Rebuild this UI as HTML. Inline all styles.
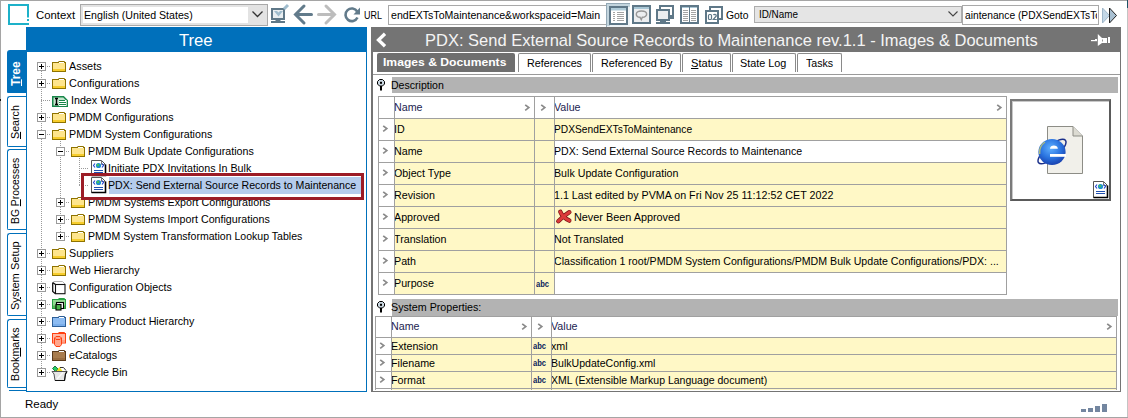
<!DOCTYPE html>
<html><head><meta charset="utf-8">
<style>
*{box-sizing:border-box;margin:0;padding:0}
html,body{width:1128px;height:418px;overflow:hidden;background:#fff}
body{position:relative;font-family:"Liberation Sans",sans-serif;color:#000}
.a{position:absolute}
.t{position:absolute;white-space:nowrap;font-family:"Liberation Sans",sans-serif}
svg{position:absolute;overflow:visible}
</style></head><body>
<div class="a" style="left:0px;top:0px;width:1128px;height:1px;background:#a5a5a5"></div>
<div class="a" style="left:0px;top:0px;width:1px;height:418px;background:#a5a5a5"></div>
<div class="a" style="left:1127px;top:0px;width:1px;height:418px;background:#c4c4c4"></div>
<div class="a" style="left:1127px;top:0px;width:1px;height:8px;background:#1d5366"></div>
<div class="a" style="left:0px;top:417px;width:1128px;height:1px;background:#a5a5a5"></div>
<div class="a" style="left:0px;top:99px;width:1px;height:2px;background:#111"></div>
<svg style="left:0px;top:0px" width="40" height="30"><g fill="#1db1c9"><rect x="8" y="4" width="21" height="2"/><rect x="8" y="4" width="2" height="21"/><rect x="8" y="23" width="21" height="2"/><rect x="27" y="4" width="2" height="13.5"/><rect x="27" y="19" width="2" height="2"/></g></svg>
<div class="t" style="left:36px;top:5.02px;font-size:11.5px;line-height:20px;transform:scaleX(0.985);transform-origin:0 0">Context</div>
<div class="a" style="left:80px;top:4px;width:188px;height:22px;background:#e3e3e3;border:1px solid #a9a9a9"></div>
<div class="a" style="left:83px;top:7px;width:165px;height:16px;background:#fff"></div>
<div class="t" style="left:83.5px;top:5.02px;font-size:11.5px;line-height:20px;transform:scaleX(0.924);transform-origin:0 0">English (United States)</div>
<svg style="left:250px;top:10px" width="16" height="10"><path d="M2.5 1.5 L7.5 6.5 L12.5 1.5" stroke="#333" stroke-width="1.3" fill="none"/></svg>
<svg style="left:270px;top:3px" width="22" height="22"><rect x="2" y="6" width="12" height="10" fill="#e9eef1" stroke="#5f7888" stroke-width="2"/><path d="M4 8 H7 L8.5 9.5 L10 8 H13 L8.5 13.5 Z" fill="#9fbccd"/><rect x="5.5" y="16" width="5" height="3" fill="#5f7888"/><rect x="1" y="18" width="14" height="2" fill="#5f7888"/><path d="M14 6 L18 2" stroke="#9fbccd" stroke-width="3"/></svg>
<svg style="left:290px;top:2px" width="26" height="26"><path d="M14 4 L5.5 12.5 L14 21 M6 12.5 H21.5" stroke="#627b8b" stroke-width="3" fill="none" stroke-linecap="round"/></svg>
<svg style="left:314px;top:2px" width="26" height="26"><path d="M12 4 L20.5 12.5 L12 21 M4.5 12.5 H20" stroke="#bdbdbd" stroke-width="3" fill="none" stroke-linecap="round"/></svg>
<svg style="left:340px;top:2px" width="24" height="24"><path d="M17.2 9.5 A6.3 6.3 0 1 0 17.5 15.5" stroke="#627b8b" stroke-width="2.6" fill="none"/><path d="M20 5.5 V12.5 H13.5 Z" fill="#627b8b"/></svg>
<div class="t" style="left:364px;top:5.02px;font-size:11.5px;line-height:20px;transform:scaleX(0.78);transform-origin:0 0">URL</div>
<div class="a" style="left:388px;top:5px;width:219px;height:20px;background:#fff;border:1px solid #a9a9a9"></div>
<div class="a" style="left:389px;top:6px;width:217px;height:18px;overflow:hidden">
<div class="t" style="left:1.5px;top:-0.98px;font-size:11.5px;line-height:20px;transform:scaleX(0.92);transform-origin:0 0">endEXTsToMaintenance&amp;workspaceid=Main</div>
</div>
<div class="a" style="left:606px;top:3px;width:24px;height:24px;background:#eef3f6;border-left:1px solid #93a8b5;border-top:1px solid #93a8b5"></div>
<div class="a" style="left:607px;top:4px;width:23px;height:3px;background:#c3d5de"></div>
<div class="a" style="left:607px;top:4px;width:3px;height:22px;background:#c3d5de"></div>
<svg style="left:609px;top:6px" width="19" height="19"><rect x="1" y="1" width="17" height="17" fill="#fff" stroke="#5f7888" stroke-width="2"/><rect x="2" y="2" width="15" height="2.5" fill="#b0ccd9"/><g stroke="#a4a4a4" stroke-width="1"><path d="M4 6.5H6M8 6.5H15M4 8.5H6M8 8.5H15M4 10.5H6M8 10.5H15M4 12.5H6M8 12.5H15M4 14.5H6M8 14.5H15"/></g></svg>
<svg style="left:632px;top:5px" width="19" height="19"><rect x="1" y="1" width="17" height="17" fill="#eceef0" stroke="#5f7888" stroke-width="2"/><rect x="2" y="2" width="15" height="2" fill="#a9c7d6"/><path d="M9.5 6 C2.8 6 2.8 12 8 12.3 L9.3 14.6 L10.3 12.3 C16.2 12 16.2 6 9.5 6 Z" fill="none" stroke="#989898" stroke-width="1.4"/></svg>
<svg style="left:655px;top:5px" width="20" height="20"><rect x="5" y="1" width="13" height="10" fill="#fff" stroke="#5f7888" stroke-width="2"/><rect x="2" y="5" width="12" height="10" fill="#eceef0" stroke="#5f7888" stroke-width="2"/><rect x="14" y="12" width="5" height="2" fill="#5f7888"/><rect x="5" y="15" width="6" height="2" fill="#5f7888"/><rect x="1" y="17" width="14" height="2" fill="#5f7888"/></svg>
<svg style="left:680px;top:5px" width="19" height="19"><rect x="1" y="1" width="17" height="17" fill="#fff" stroke="#5f7888" stroke-width="2"/><rect x="2" y="2" width="15" height="1" fill="#a9c7d6"/><rect x="9" y="2" width="1" height="15" fill="#5f7888"/><g stroke="#a4a4a4" stroke-width="1"><path d="M3 5.5H8M11 5.5H16M3 7.5H8M11 7.5H16M3 9.5H8M11 9.5H16M3 11.5H8M11 11.5H16M3 13.5H8M11 13.5H16M3 15.5H8M11 15.5H16"/></g></svg>
<svg style="left:704px;top:5px" width="20" height="20"><rect x="6" y="2" width="12" height="12" fill="#fff" stroke="#5f7888" stroke-width="2"/><rect x="2" y="6" width="12" height="12" fill="#fff" stroke="#5f7888" stroke-width="2"/><rect x="4.5" y="9.5" width="3" height="5" rx="1" fill="none" stroke="#5f7888" stroke-width="1.2"/><path d="M9.3 10 Q9.8 9.3 11 9.3 Q12.5 9.5 12.3 11 L9.3 14.5 H12.8" fill="none" stroke="#5f7888" stroke-width="1.2"/></svg>
<div class="t" style="left:726px;top:5.02px;font-size:11.5px;line-height:20px;transform:scaleX(0.9);transform-origin:0 0">Goto</div>
<div class="a" style="left:754px;top:6px;width:208px;height:17px;background:#e5e5e5;border:1px solid #acacac"></div>
<div class="t" style="left:759px;top:4.36px;font-size:10.5px;line-height:20px;transform:scaleX(0.94);transform-origin:0 0">ID/Name</div>
<svg style="left:946px;top:10px" width="16" height="10"><path d="M2.5 1.5 L7 6 L11.5 1.5" stroke="#444" stroke-width="1.1" fill="none"/></svg>
<div class="a" style="left:962px;top:5px;width:137px;height:20px;background:#fff;border:1px solid #a9a9a9"></div>
<div class="a" style="left:963px;top:6px;width:134px;height:18px;overflow:hidden">
<div class="t" style="left:1.5px;top:-0.98px;font-size:11.5px;line-height:20px;transform:scaleX(0.89);transform-origin:0 0">aintenance (PDXSendEXTsToMaintenance)</div>
</div>
<svg style="left:1100px;top:6px" width="20" height="20"><path d="M2.5 2 L9.5 9.5 L2.5 17 Z" fill="#c3d7e6" stroke="#9fb6c8" stroke-width="1"/><path d="M9.5 2 L16.5 9.5 L9.5 17 Z" fill="#a9c0d2" stroke="#222" stroke-width="1"/></svg>
<div class="a" style="left:7px;top:50px;width:20px;height:43px;background:#0070bb;border-radius:3px 0 0 1px"></div>
<div class="a" style="left:9.80px;top:86px;transform:rotate(-90deg) scaleX(1);transform-origin:0 0;font:bold 12px/12px 'Liberation Sans';color:#fff;white-space:nowrap"><u>T</u>ree</div>
<div class="a" style="left:7px;top:96px;width:20px;height:51px;background:#fff;border:1px solid #0070bb;border-right:0;border-radius:3px 0 0 2px"></div>
<div class="a" style="left:10.22px;top:138.5px;transform:rotate(-90deg) scaleX(0.93);transform-origin:0 0;font:11.5px/11.5px 'Liberation Sans';color:#000;white-space:nowrap"><u>S</u>earch</div>
<div class="a" style="left:7px;top:149px;width:20px;height:81px;background:#fff;border:1px solid #0070bb;border-right:0;border-radius:3px 0 0 2px"></div>
<div class="a" style="left:10.22px;top:223.5px;transform:rotate(-90deg) scaleX(0.9);transform-origin:0 0;font:11.5px/11.5px 'Liberation Sans';color:#000;white-space:nowrap">BG <u>P</u>rocesses</div>
<div class="a" style="left:7px;top:233px;width:20px;height:83px;background:#fff;border:1px solid #0070bb;border-right:0;border-radius:3px 0 0 2px"></div>
<div class="a" style="left:10.22px;top:309.5px;transform:rotate(-90deg) scaleX(0.96);transform-origin:0 0;font:11.5px/11.5px 'Liberation Sans';color:#000;white-space:nowrap">S<u>y</u>stem Setup</div>
<div class="a" style="left:7px;top:319px;width:20px;height:69px;background:#fff;border:1px solid #0070bb;border-right:0;border-radius:3px 0 0 2px"></div>
<div class="a" style="left:10.22px;top:380.5px;transform:rotate(-90deg) scaleX(0.93);transform-origin:0 0;font:11.5px/11.5px 'Liberation Sans';color:#000;white-space:nowrap">Book<u>m</u>arks</div>
<div class="a" style="left:9px;top:390px;width:18px;height:1px;background:#0070bb"></div>
<div class="a" style="left:26px;top:27px;width:341px;height:365px;background:transparent;border:1px solid #0070bb;border-top:0"></div>
<div class="a" style="left:26px;top:27px;width:341px;height:25px;background:#0070bb"></div>
<div class="t" style="left:179px;top:30.71px;font-size:17px;line-height:20px;transform:scaleX(0.98);transform-origin:0 0;color:#fff">Tree</div>
<div class="a" style="left:41px;top:71px;width:1px;height:297px;background:repeating-linear-gradient(#9a9a9a 0 1px,transparent 1px 2px)"></div>
<div class="a" style="left:60px;top:139px;width:1px;height:93px;background:repeating-linear-gradient(#9a9a9a 0 1px,transparent 1px 2px)"></div>
<div class="a" style="left:79px;top:156px;width:1px;height:30px;background:repeating-linear-gradient(#9a9a9a 0 1px,transparent 1px 2px)"></div>
<div class="a" style="left:109px;top:177px;width:252px;height:17px;background:#b5ccec"></div>
<div class="a" style="left:47px;top:66px;width:4px;height:1px;background:repeating-linear-gradient(90deg,#9a9a9a 0 1px,transparent 1px 2px)"></div>
<svg style="left:37px;top:62px" width="9" height="9"><rect x="0.5" y="0.5" width="8" height="8" fill="#fff" stroke="#9a9a9a"/><rect x="2" y="4" width="5" height="1" fill="#000"/><rect x="4" y="2" width="1" height="5" fill="#000"/></svg>
<svg style="left:52px;top:61px" width="15" height="12"><path d="M6.5 0.5 H12.5 V2.5" fill="none" stroke="#8f7300"/><rect x="0.5" y="1.5" width="13" height="9" fill="#fee58c" stroke="#8f7300"/><rect x="1" y="8" width="12" height="2" fill="#f7cd2c"/><rect x="7" y="1" width="5" height="1" fill="#fff"/></svg>
<div class="t" style="left:68.6px;top:56.02px;font-size:11.5px;line-height:20px;transform:scaleX(0.945);transform-origin:0 0">Assets</div>
<div class="a" style="left:47px;top:83px;width:4px;height:1px;background:repeating-linear-gradient(90deg,#9a9a9a 0 1px,transparent 1px 2px)"></div>
<svg style="left:37px;top:79px" width="9" height="9"><rect x="0.5" y="0.5" width="8" height="8" fill="#fff" stroke="#9a9a9a"/><rect x="2" y="4" width="5" height="1" fill="#000"/><rect x="4" y="2" width="1" height="5" fill="#000"/></svg>
<svg style="left:52px;top:78px" width="15" height="12"><path d="M6.5 0.5 H12.5 V2.5" fill="none" stroke="#8f7300"/><rect x="0.5" y="1.5" width="13" height="9" fill="#fee58c" stroke="#8f7300"/><rect x="1" y="8" width="12" height="2" fill="#f7cd2c"/><rect x="7" y="1" width="5" height="1" fill="#fff"/></svg>
<div class="t" style="left:68.6px;top:73.02px;font-size:11.5px;line-height:20px;transform:scaleX(0.949);transform-origin:0 0">Configurations</div>
<div class="a" style="left:41px;top:100px;width:10px;height:1px;background:repeating-linear-gradient(90deg,#9a9a9a 0 1px,transparent 1px 2px)"></div>
<svg style="left:52px;top:96px" width="17" height="12"><path d="M0.75 0.75 H11.5 L15.25 4.5 V10.25 H0.75 Z" fill="#c4e4cc" stroke="#18874a" stroke-width="1.5"/><rect x="7" y="4" width="7.5" height="6" fill="#fff"/><path d="M7 4.5 H13 M7 6.5 H14 M7 8.5 H14" stroke="#18874a" stroke-width="1.2"/><path d="M3 2.5 H6 M4.5 2.5 V8.5 M3 8.5 H6" stroke="#000" stroke-width="1.4"/></svg>
<div class="t" style="left:70.5px;top:90.02px;font-size:11.5px;line-height:20px;transform:scaleX(0.93);transform-origin:0 0">Index Words</div>
<div class="a" style="left:47px;top:117px;width:4px;height:1px;background:repeating-linear-gradient(90deg,#9a9a9a 0 1px,transparent 1px 2px)"></div>
<svg style="left:37px;top:113px" width="9" height="9"><rect x="0.5" y="0.5" width="8" height="8" fill="#fff" stroke="#9a9a9a"/><rect x="2" y="4" width="5" height="1" fill="#000"/><rect x="4" y="2" width="1" height="5" fill="#000"/></svg>
<svg style="left:52px;top:112px" width="15" height="12"><path d="M6.5 0.5 H12.5 V2.5" fill="none" stroke="#8f7300"/><rect x="0.5" y="1.5" width="13" height="9" fill="#fee58c" stroke="#8f7300"/><rect x="1" y="8" width="12" height="2" fill="#f7cd2c"/><rect x="7" y="1" width="5" height="1" fill="#fff"/></svg>
<div class="t" style="left:68.6px;top:107.02px;font-size:11.5px;line-height:20px;transform:scaleX(0.93);transform-origin:0 0">PMDM Configurations</div>
<div class="a" style="left:47px;top:134px;width:4px;height:1px;background:repeating-linear-gradient(90deg,#9a9a9a 0 1px,transparent 1px 2px)"></div>
<svg style="left:37px;top:130px" width="9" height="9"><rect x="0.5" y="0.5" width="8" height="8" fill="#fff" stroke="#9a9a9a"/><rect x="2" y="4" width="5" height="1" fill="#000"/></svg>
<svg style="left:52px;top:129px" width="15" height="12"><path d="M6.5 0.5 H12.5 V2.5" fill="none" stroke="#8f7300"/><rect x="0.5" y="1.5" width="13" height="9" fill="#fee58c" stroke="#8f7300"/><rect x="1" y="8" width="12" height="2" fill="#f7cd2c"/><rect x="7" y="1" width="5" height="1" fill="#fff"/></svg>
<div class="t" style="left:68.6px;top:124.02px;font-size:11.5px;line-height:20px;transform:scaleX(0.93);transform-origin:0 0">PMDM System Configurations</div>
<div class="a" style="left:66px;top:151px;width:4px;height:1px;background:repeating-linear-gradient(90deg,#9a9a9a 0 1px,transparent 1px 2px)"></div>
<svg style="left:56px;top:147px" width="9" height="9"><rect x="0.5" y="0.5" width="8" height="8" fill="#fff" stroke="#9a9a9a"/><rect x="2" y="4" width="5" height="1" fill="#000"/></svg>
<svg style="left:71px;top:146px" width="15" height="12"><path d="M6.5 0.5 H12.5 V2.5" fill="none" stroke="#8f7300"/><rect x="0.5" y="1.5" width="13" height="9" fill="#fee58c" stroke="#8f7300"/><rect x="1" y="8" width="12" height="2" fill="#f7cd2c"/><rect x="7" y="1" width="5" height="1" fill="#fff"/></svg>
<div class="t" style="left:87.5px;top:141.02px;font-size:11.5px;line-height:20px;transform:scaleX(0.93);transform-origin:0 0">PMDM Bulk Update Configurations</div>
<div class="a" style="left:79px;top:168px;width:10px;height:1px;background:repeating-linear-gradient(90deg,#9a9a9a 0 1px,transparent 1px 2px)"></div>
<svg style="left:91px;top:160px" width="16" height="17"><path d="M0.5 0.5 H10.5 L14.5 4.5 V15.5 H0.5 Z" fill="#fff" stroke="#555"/><path d="M14.5 4.5 V15.5 H0.5" fill="none" stroke="#000" stroke-width="1.6"/><path d="M10.5 0.5 V4.5 H14.5" fill="none" stroke="#777"/><path d="M4 3.5 L2.5 5.5 L4 7.5 M11 3.5 L12.5 5.5 L11 7.5" fill="none" stroke="#1f3fd0" stroke-width="1.1"/><circle cx="7.5" cy="5.5" r="2.6" fill="#1f8fd0"/><circle cx="7" cy="5" r="1.3" fill="#40c060"/><rect x="3" y="10" width="9" height="1" fill="#2050b0"/><rect x="3" y="12" width="9" height="1" fill="#2050b0"/></svg>
<div class="t" style="left:108.3px;top:158.02px;font-size:11.5px;line-height:20px;transform:scaleX(0.93);transform-origin:0 0">Initiate PDX Invitations In Bulk</div>
<div class="a" style="left:79px;top:185px;width:10px;height:1px;background:repeating-linear-gradient(90deg,#9a9a9a 0 1px,transparent 1px 2px)"></div>
<svg style="left:91px;top:177px" width="16" height="17"><path d="M0.5 0.5 H10.5 L14.5 4.5 V15.5 H0.5 Z" fill="#fff" stroke="#555"/><path d="M14.5 4.5 V15.5 H0.5" fill="none" stroke="#000" stroke-width="1.6"/><path d="M10.5 0.5 V4.5 H14.5" fill="none" stroke="#777"/><path d="M4 3.5 L2.5 5.5 L4 7.5 M11 3.5 L12.5 5.5 L11 7.5" fill="none" stroke="#1f3fd0" stroke-width="1.1"/><circle cx="7.5" cy="5.5" r="2.6" fill="#1f8fd0"/><circle cx="7" cy="5" r="1.3" fill="#40c060"/><rect x="3" y="10" width="9" height="1" fill="#2050b0"/><rect x="3" y="12" width="9" height="1" fill="#2050b0"/></svg>
<div class="t" style="left:108.3px;top:175.02px;font-size:11.5px;line-height:20px;transform:scaleX(0.92);transform-origin:0 0">PDX: Send External Source Records to Maintenance</div>
<div class="a" style="left:66px;top:202px;width:4px;height:1px;background:repeating-linear-gradient(90deg,#9a9a9a 0 1px,transparent 1px 2px)"></div>
<svg style="left:56px;top:198px" width="9" height="9"><rect x="0.5" y="0.5" width="8" height="8" fill="#fff" stroke="#9a9a9a"/><rect x="2" y="4" width="5" height="1" fill="#000"/><rect x="4" y="2" width="1" height="5" fill="#000"/></svg>
<svg style="left:71px;top:197px" width="15" height="12"><path d="M6.5 0.5 H12.5 V2.5" fill="none" stroke="#8f7300"/><rect x="0.5" y="1.5" width="13" height="9" fill="#fee58c" stroke="#8f7300"/><rect x="1" y="8" width="12" height="2" fill="#f7cd2c"/><rect x="7" y="1" width="5" height="1" fill="#fff"/></svg>
<div class="t" style="left:87.5px;top:192.02px;font-size:11.5px;line-height:20px;transform:scaleX(0.93);transform-origin:0 0">PMDM Systems Export Configurations</div>
<div class="a" style="left:66px;top:219px;width:4px;height:1px;background:repeating-linear-gradient(90deg,#9a9a9a 0 1px,transparent 1px 2px)"></div>
<svg style="left:56px;top:215px" width="9" height="9"><rect x="0.5" y="0.5" width="8" height="8" fill="#fff" stroke="#9a9a9a"/><rect x="2" y="4" width="5" height="1" fill="#000"/><rect x="4" y="2" width="1" height="5" fill="#000"/></svg>
<svg style="left:71px;top:214px" width="15" height="12"><path d="M6.5 0.5 H12.5 V2.5" fill="none" stroke="#8f7300"/><rect x="0.5" y="1.5" width="13" height="9" fill="#fee58c" stroke="#8f7300"/><rect x="1" y="8" width="12" height="2" fill="#f7cd2c"/><rect x="7" y="1" width="5" height="1" fill="#fff"/></svg>
<div class="t" style="left:87.5px;top:209.02px;font-size:11.5px;line-height:20px;transform:scaleX(0.93);transform-origin:0 0">PMDM Systems Import Configurations</div>
<div class="a" style="left:66px;top:236px;width:4px;height:1px;background:repeating-linear-gradient(90deg,#9a9a9a 0 1px,transparent 1px 2px)"></div>
<svg style="left:56px;top:232px" width="9" height="9"><rect x="0.5" y="0.5" width="8" height="8" fill="#fff" stroke="#9a9a9a"/><rect x="2" y="4" width="5" height="1" fill="#000"/><rect x="4" y="2" width="1" height="5" fill="#000"/></svg>
<svg style="left:71px;top:231px" width="15" height="12"><path d="M6.5 0.5 H12.5 V2.5" fill="none" stroke="#8f7300"/><rect x="0.5" y="1.5" width="13" height="9" fill="#fee58c" stroke="#8f7300"/><rect x="1" y="8" width="12" height="2" fill="#f7cd2c"/><rect x="7" y="1" width="5" height="1" fill="#fff"/></svg>
<div class="t" style="left:87.5px;top:226.02px;font-size:11.5px;line-height:20px;transform:scaleX(0.917);transform-origin:0 0">PMDM System Transformation Lookup Tables</div>
<div class="a" style="left:47px;top:253px;width:4px;height:1px;background:repeating-linear-gradient(90deg,#9a9a9a 0 1px,transparent 1px 2px)"></div>
<svg style="left:37px;top:249px" width="9" height="9"><rect x="0.5" y="0.5" width="8" height="8" fill="#fff" stroke="#9a9a9a"/><rect x="2" y="4" width="5" height="1" fill="#000"/><rect x="4" y="2" width="1" height="5" fill="#000"/></svg>
<svg style="left:52px;top:248px" width="15" height="12"><path d="M6.5 0.5 H12.5 V2.5" fill="none" stroke="#8f7300"/><rect x="0.5" y="1.5" width="13" height="9" fill="#fee58c" stroke="#8f7300"/><rect x="1" y="8" width="12" height="2" fill="#f7cd2c"/><rect x="7" y="1" width="5" height="1" fill="#fff"/></svg>
<div class="t" style="left:68.6px;top:243.02px;font-size:11.5px;line-height:20px;transform:scaleX(0.93);transform-origin:0 0">Suppliers</div>
<div class="a" style="left:47px;top:270px;width:4px;height:1px;background:repeating-linear-gradient(90deg,#9a9a9a 0 1px,transparent 1px 2px)"></div>
<svg style="left:37px;top:266px" width="9" height="9"><rect x="0.5" y="0.5" width="8" height="8" fill="#fff" stroke="#9a9a9a"/><rect x="2" y="4" width="5" height="1" fill="#000"/><rect x="4" y="2" width="1" height="5" fill="#000"/></svg>
<svg style="left:52px;top:265px" width="15" height="12"><path d="M6.5 0.5 H12.5 V2.5" fill="none" stroke="#8f7300"/><rect x="0.5" y="1.5" width="13" height="9" fill="#fee58c" stroke="#8f7300"/><rect x="1" y="8" width="12" height="2" fill="#f7cd2c"/><rect x="7" y="1" width="5" height="1" fill="#fff"/></svg>
<div class="t" style="left:68.6px;top:260.02px;font-size:11.5px;line-height:20px;transform:scaleX(0.93);transform-origin:0 0">Web Hierarchy</div>
<div class="a" style="left:47px;top:287px;width:4px;height:1px;background:repeating-linear-gradient(90deg,#9a9a9a 0 1px,transparent 1px 2px)"></div>
<svg style="left:37px;top:283px" width="9" height="9"><rect x="0.5" y="0.5" width="8" height="8" fill="#fff" stroke="#9a9a9a"/><rect x="2" y="4" width="5" height="1" fill="#000"/><rect x="4" y="2" width="1" height="5" fill="#000"/></svg>
<svg style="left:52px;top:281px" width="15" height="14"><path d="M1.5 0.5 H10.5 L13 3" fill="none" stroke="#b0b0b0"/><path d="M0.7 1.5 V10.5 L3.5 12.8 M0.7 1.5 L3.5 3.5" fill="none" stroke="#111" stroke-width="1.3"/><rect x="3.5" y="3.5" width="9.5" height="9.2" fill="#fff" stroke="#111" stroke-width="1.1"/></svg>
<div class="t" style="left:68.6px;top:277.02px;font-size:11.5px;line-height:20px;transform:scaleX(0.93);transform-origin:0 0">Configuration Objects</div>
<div class="a" style="left:47px;top:304px;width:4px;height:1px;background:repeating-linear-gradient(90deg,#9a9a9a 0 1px,transparent 1px 2px)"></div>
<svg style="left:37px;top:300px" width="9" height="9"><rect x="0.5" y="0.5" width="8" height="8" fill="#fff" stroke="#9a9a9a"/><rect x="2" y="4" width="5" height="1" fill="#000"/><rect x="4" y="2" width="1" height="5" fill="#000"/></svg>
<svg style="left:52px;top:297px" width="15" height="15"><path d="M6.5 1.5 H12.5 V3" fill="none" stroke="#27a243"/><rect x="0.5" y="2.5" width="13" height="9" fill="#92d892" stroke="#27a243"/><rect x="1" y="8.5" width="12" height="2.5" fill="#56b956"/><rect x="4.5" y="5.5" width="7" height="6" fill="#fff" stroke="#000" stroke-width="1.1"/><rect x="4" y="7.5" width="5" height="5.5" fill="#4cb54c" stroke="#000" stroke-width="1.1"/></svg>
<div class="t" style="left:68.6px;top:294.02px;font-size:11.5px;line-height:20px;transform:scaleX(0.93);transform-origin:0 0">Publications</div>
<div class="a" style="left:47px;top:321px;width:4px;height:1px;background:repeating-linear-gradient(90deg,#9a9a9a 0 1px,transparent 1px 2px)"></div>
<svg style="left:37px;top:317px" width="9" height="9"><rect x="0.5" y="0.5" width="8" height="8" fill="#fff" stroke="#9a9a9a"/><rect x="2" y="4" width="5" height="1" fill="#000"/><rect x="4" y="2" width="1" height="5" fill="#000"/></svg>
<svg style="left:52px;top:316px" width="15" height="12"><path d="M6.5 0.5 H12.5 V2.5" fill="none" stroke="#2d5f98"/><rect x="0.5" y="1.5" width="13" height="9" fill="#8dbcf2" stroke="#2d5f98"/><rect x="1" y="8" width="12" height="2" fill="#7aaeea"/><rect x="7" y="1" width="5" height="1" fill="#fff"/></svg>
<div class="t" style="left:68.6px;top:311.02px;font-size:11.5px;line-height:20px;transform:scaleX(0.93);transform-origin:0 0">Primary Product Hierarchy</div>
<div class="a" style="left:47px;top:338px;width:4px;height:1px;background:repeating-linear-gradient(90deg,#9a9a9a 0 1px,transparent 1px 2px)"></div>
<svg style="left:37px;top:334px" width="9" height="9"><rect x="0.5" y="0.5" width="8" height="8" fill="#fff" stroke="#9a9a9a"/><rect x="2" y="4" width="5" height="1" fill="#000"/><rect x="4" y="2" width="1" height="5" fill="#000"/></svg>
<svg style="left:52px;top:331px" width="15" height="17"><path d="M6.5 1.5 H12.5 V3" fill="none" stroke="#ff4010"/><rect x="0.5" y="2.5" width="13" height="9.5" fill="#ffb9a5" stroke="#ff4010"/><rect x="1" y="9" width="12" height="2.5" fill="#ff9f85"/><path d="M2.5 7 L4 5.5 H8 L9.5 7 V13.5 L8 15.5 H4 L2.5 13.5 Z" fill="#ffa68c" stroke="#ff4010"/><path d="M2.5 7 L4 8.5 H8 L9.5 7" fill="none" stroke="#ff4010"/></svg>
<div class="t" style="left:68.6px;top:328.02px;font-size:11.5px;line-height:20px;transform:scaleX(0.93);transform-origin:0 0">Collections</div>
<div class="a" style="left:47px;top:355px;width:4px;height:1px;background:repeating-linear-gradient(90deg,#9a9a9a 0 1px,transparent 1px 2px)"></div>
<svg style="left:37px;top:351px" width="9" height="9"><rect x="0.5" y="0.5" width="8" height="8" fill="#fff" stroke="#9a9a9a"/><rect x="2" y="4" width="5" height="1" fill="#000"/><rect x="4" y="2" width="1" height="5" fill="#000"/></svg>
<svg style="left:52px;top:350px" width="15" height="12"><path d="M6.5 0.5 H12.5 V2.5" fill="none" stroke="#5b3b1c"/><rect x="0.5" y="1.5" width="13" height="9" fill="#a97c4d" stroke="#5b3b1c"/><rect x="1" y="8" width="12" height="2" fill="#9a6d40"/><rect x="7" y="1" width="5" height="1" fill="#fff"/></svg>
<div class="t" style="left:68.6px;top:345.02px;font-size:11.5px;line-height:20px;transform:scaleX(0.93);transform-origin:0 0">eCatalogs</div>
<div class="a" style="left:47px;top:372px;width:4px;height:1px;background:repeating-linear-gradient(90deg,#9a9a9a 0 1px,transparent 1px 2px)"></div>
<svg style="left:37px;top:368px" width="9" height="9"><rect x="0.5" y="0.5" width="8" height="8" fill="#fff" stroke="#9a9a9a"/><rect x="2" y="4" width="5" height="1" fill="#000"/><rect x="4" y="2" width="1" height="5" fill="#000"/></svg>
<svg style="left:51px;top:365px" width="17" height="17"><path d="M1.5 3.5 L4 1 L7 4 L4.5 6.5 Z" fill="#22cc66" stroke="#0a5a20" stroke-width="0.8"/><path d="M5.5 6 L8.5 2 L11.5 6 Z" fill="#eedd22"/><path d="M9 2.5 H12.5 L15 5.5" stroke="#333" fill="none"/><path d="M1 6.5 H16 L14.5 9 L13.5 15.5 H4 L3 9 Z" fill="#e6e6e6" stroke="#555"/><path d="M16 6.5 L14.5 9 L13.5 15.5 H4" fill="none" stroke="#111" stroke-width="1.2"/><path d="M6 14 L12 7.5" stroke="#fafafa" stroke-width="1.3"/></svg>
<div class="t" style="left:71px;top:362.02px;font-size:11.5px;line-height:20px;transform:scaleX(0.93);transform-origin:0 0">Recycle Bin</div>
<div class="a" style="left:81px;top:173px;width:283px;height:27px;background:transparent;border:3px solid #9c1c26"></div>
<div class="a" style="left:371px;top:27px;width:750px;height:365px;background:transparent;border:1px solid #747474;border-left:2px solid #747474;border-top:0"></div>
<div class="a" style="left:371px;top:27px;width:750px;height:25px;background:#747474"></div>
<div class="t" style="left:425px;top:30.71px;font-size:17px;line-height:20px;transform:scaleX(0.97);transform-origin:0 0;color:#f4f4f4">PDX: Send External Source Records to Maintenance rev.1.1 - Images &amp; Documents</div>
<svg style="left:372px;top:28px" width="20" height="22"><path d="M13 5.8 L6.5 12 L13 18.2" stroke="#fff" stroke-width="3.3" fill="none"/></svg>
<svg style="left:1089px;top:32px" width="24" height="16"><g fill="#fff"><rect x="2" y="8" width="6" height="1.2"/><rect x="6" y="7" width="2" height="1"/><path d="M8.8 2 L13 6 V11 L8.8 14 Z"/><rect x="13" y="6" width="5" height="5"/><rect x="19" y="5" width="2" height="6"/></g><rect x="13" y="7.5" width="1" height="2" fill="#999"/></svg>
<div class="a" style="left:377px;top:53px;width:138px;height:19px;background:#6f6f6f;border-radius:2px 2px 0 0"></div>
<div class="t" style="left:383px;top:52.02px;font-size:11.5px;line-height:20px;transform:scaleX(1.055);transform-origin:0 0;color:#fff;font-weight:bold">Images &amp; Documents</div>
<div class="a" style="left:518px;top:53px;width:73px;height:19px;background:#fff;border:1px solid #8a8a8a;border-bottom:0;border-radius:2px 2px 0 0"></div>
<div class="t" style="left:527px;top:53.02px;font-size:11.5px;line-height:20px;transform:scaleX(0.935);transform-origin:0 0">References</div>
<div class="a" style="left:592px;top:53px;width:89px;height:19px;background:#fff;border:1px solid #8a8a8a;border-bottom:0;border-radius:2px 2px 0 0"></div>
<div class="t" style="left:600.5px;top:53.02px;font-size:11.5px;line-height:20px;transform:scaleX(0.938);transform-origin:0 0">Referenced By</div>
<div class="a" style="left:682px;top:53px;width:49px;height:19px;background:#fff;border:1px solid #8a8a8a;border-bottom:0;border-radius:2px 2px 0 0"></div>
<div class="t" style="left:690.5px;top:53.02px;font-size:11.5px;line-height:20px;transform:scaleX(0.966);transform-origin:0 0"><u>S</u>tatus</div>
<div class="a" style="left:732px;top:53px;width:64px;height:19px;background:#fff;border:1px solid #8a8a8a;border-bottom:0;border-radius:2px 2px 0 0"></div>
<div class="t" style="left:739.5px;top:53.02px;font-size:11.5px;line-height:20px;transform:scaleX(0.941);transform-origin:0 0">State Log</div>
<div class="a" style="left:797px;top:53px;width:45px;height:19px;background:#fff;border:1px solid #8a8a8a;border-bottom:0;border-radius:2px 2px 0 0"></div>
<div class="t" style="left:805.5px;top:53.02px;font-size:11.5px;line-height:20px;transform:scaleX(0.925);transform-origin:0 0">Tasks</div>
<div class="a" style="left:373px;top:74px;width:747px;height:1px;background:#9a9a9a"></div>
<svg style="left:377px;top:79px" width="9" height="12"><path d="M2.5 0.5 H5.5 L7.5 2.5 V5 L5.5 7 H2.5 L0.5 5 V2.5 Z" fill="#c9d6e0" stroke="#000"/><rect x="3" y="2.8" width="2" height="2" fill="#000"/><rect x="3" y="7" width="2" height="4.5" fill="#000"/></svg>
<div class="a" style="left:392px;top:77px;width:726px;height:16px;background:#b3b3b3"></div>
<div class="t" style="left:391px;top:75.02px;font-size:11.5px;line-height:20px;transform:scaleX(0.918);transform-origin:0 0">Description</div>
<div class="a" style="left:378px;top:96px;width:629px;height:199px;background:#fff;border:1px solid #a0a0a0"></div>
<div class="t" style="left:394.2px;top:97.02px;font-size:11.5px;line-height:20px;transform:scaleX(0.93);transform-origin:0 0;color:#1b1b50">Name</div>
<div class="t" style="left:554.2px;top:97.02px;font-size:11.5px;line-height:20px;transform:scaleX(0.93);transform-origin:0 0;color:#1b1b50">Value</div>
<svg style="left:524px;top:103.5px" width="7" height="9"><path d="M1.2 0.8 L4.8 3.6 L1.2 6.4" stroke="#8a8a8a" stroke-width="1.7" fill="none"/></svg>
<svg style="left:540px;top:103.5px" width="7" height="9"><path d="M1.2 0.8 L4.8 3.6 L1.2 6.4" stroke="#8a8a8a" stroke-width="1.7" fill="none"/></svg>
<svg style="left:996px;top:103.5px" width="7" height="9"><path d="M1.2 0.8 L4.8 3.6 L1.2 6.4" stroke="#8a8a8a" stroke-width="1.7" fill="none"/></svg>
<div class="a" style="left:395px;top:118px;width:611px;height:22px;background:#fff8c6"></div>
<div class="a" style="left:379px;top:118px;width:627px;height:1px;background:#a0a0a0"></div>
<svg style="left:382px;top:125px" width="7" height="9"><path d="M1.2 0.8 L4.8 3.6 L1.2 6.4" stroke="#8a8a8a" stroke-width="1.7" fill="none"/></svg>
<div class="t" style="left:394px;top:119.02px;font-size:11.5px;line-height:20px;transform:scaleX(0.93);transform-origin:0 0">ID</div>
<div class="t" style="left:554.2px;top:119.02px;font-size:11.5px;line-height:20px;transform:scaleX(0.889);transform-origin:0 0">PDXSendEXTsToMaintenance</div>
<div class="a" style="left:395px;top:140px;width:611px;height:22px;background:#fff8c6"></div>
<div class="a" style="left:555px;top:140px;width:451px;height:22px;background:#fff"></div>
<div class="a" style="left:379px;top:140px;width:627px;height:1px;background:#a0a0a0"></div>
<svg style="left:382px;top:147px" width="7" height="9"><path d="M1.2 0.8 L4.8 3.6 L1.2 6.4" stroke="#8a8a8a" stroke-width="1.7" fill="none"/></svg>
<div class="t" style="left:394px;top:141.02px;font-size:11.5px;line-height:20px;transform:scaleX(0.93);transform-origin:0 0">Name</div>
<div class="t" style="left:554.2px;top:141.02px;font-size:11.5px;line-height:20px;transform:scaleX(0.92);transform-origin:0 0">PDX: Send External Source Records to Maintenance</div>
<div class="a" style="left:395px;top:162px;width:611px;height:22px;background:#fff8c6"></div>
<div class="a" style="left:379px;top:162px;width:627px;height:1px;background:#a0a0a0"></div>
<svg style="left:382px;top:169px" width="7" height="9"><path d="M1.2 0.8 L4.8 3.6 L1.2 6.4" stroke="#8a8a8a" stroke-width="1.7" fill="none"/></svg>
<div class="t" style="left:394px;top:163.02px;font-size:11.5px;line-height:20px;transform:scaleX(0.93);transform-origin:0 0">Object Type</div>
<div class="t" style="left:554.2px;top:163.02px;font-size:11.5px;line-height:20px;transform:scaleX(0.927);transform-origin:0 0">Bulk Update Configuration</div>
<div class="a" style="left:395px;top:184px;width:611px;height:22px;background:#fff8c6"></div>
<div class="a" style="left:379px;top:184px;width:627px;height:1px;background:#a0a0a0"></div>
<svg style="left:382px;top:191px" width="7" height="9"><path d="M1.2 0.8 L4.8 3.6 L1.2 6.4" stroke="#8a8a8a" stroke-width="1.7" fill="none"/></svg>
<div class="t" style="left:394px;top:185.02px;font-size:11.5px;line-height:20px;transform:scaleX(0.93);transform-origin:0 0">Revision</div>
<div class="t" style="left:554.2px;top:185.02px;font-size:11.5px;line-height:20px;transform:scaleX(0.931);transform-origin:0 0">1.1 Last edited by PVMA on Fri Nov 25 11:12:52 CET 2022</div>
<div class="a" style="left:395px;top:206px;width:611px;height:22px;background:#fff8c6"></div>
<div class="a" style="left:379px;top:206px;width:627px;height:1px;background:#a0a0a0"></div>
<svg style="left:382px;top:213px" width="7" height="9"><path d="M1.2 0.8 L4.8 3.6 L1.2 6.4" stroke="#8a8a8a" stroke-width="1.7" fill="none"/></svg>
<div class="t" style="left:394px;top:207.02px;font-size:11.5px;line-height:20px;transform:scaleX(0.93);transform-origin:0 0">Approved</div>
<svg style="left:552.5px;top:207px" width="22" height="20"><path d="M7.3 4.8 Q9.5 10.5 16.3 13.6 M16.3 5.2 Q11 8.5 5.3 14.2" stroke="#7a1515" stroke-width="4.4" stroke-linecap="round" fill="none"/><path d="M7.3 4.8 Q9.5 10.5 16.3 13.6 M16.3 5.2 Q11 8.5 5.3 14.2" stroke="#dc3a3a" stroke-width="3" stroke-linecap="round" fill="none"/></svg>
<div class="t" style="left:573.5px;top:207.02px;font-size:11.5px;line-height:20px;transform:scaleX(0.943);transform-origin:0 0">Never Been Approved</div>
<div class="a" style="left:395px;top:228px;width:611px;height:22px;background:#fff8c6"></div>
<div class="a" style="left:379px;top:228px;width:627px;height:1px;background:#a0a0a0"></div>
<svg style="left:382px;top:235px" width="7" height="9"><path d="M1.2 0.8 L4.8 3.6 L1.2 6.4" stroke="#8a8a8a" stroke-width="1.7" fill="none"/></svg>
<div class="t" style="left:394px;top:229.02px;font-size:11.5px;line-height:20px;transform:scaleX(0.93);transform-origin:0 0">Translation</div>
<div class="t" style="left:554.2px;top:229.02px;font-size:11.5px;line-height:20px;transform:scaleX(0.93);transform-origin:0 0">Not Translated</div>
<div class="a" style="left:395px;top:250px;width:611px;height:22px;background:#fff8c6"></div>
<div class="a" style="left:379px;top:250px;width:627px;height:1px;background:#a0a0a0"></div>
<svg style="left:382px;top:257px" width="7" height="9"><path d="M1.2 0.8 L4.8 3.6 L1.2 6.4" stroke="#8a8a8a" stroke-width="1.7" fill="none"/></svg>
<div class="t" style="left:394px;top:251.02px;font-size:11.5px;line-height:20px;transform:scaleX(0.93);transform-origin:0 0">Path</div>
<div class="t" style="left:554.2px;top:251.02px;font-size:11.5px;line-height:20px;transform:scaleX(0.923);transform-origin:0 0">Classification 1 root/PMDM System Configurations/PMDM Bulk Update Configurations/PDX: ...</div>
<div class="a" style="left:395px;top:272px;width:611px;height:22px;background:#fff8c6"></div>
<div class="a" style="left:555px;top:272px;width:451px;height:22px;background:#fff"></div>
<div class="a" style="left:379px;top:272px;width:627px;height:1px;background:#a0a0a0"></div>
<svg style="left:382px;top:279px" width="7" height="9"><path d="M1.2 0.8 L4.8 3.6 L1.2 6.4" stroke="#8a8a8a" stroke-width="1.7" fill="none"/></svg>
<div class="t" style="left:394px;top:273.02px;font-size:11.5px;line-height:20px;transform:scaleX(0.93);transform-origin:0 0">Purpose</div>
<div class="t" style="left:554.2px;top:273.02px;font-size:11.5px;line-height:20px;transform:scaleX(0.93);transform-origin:0 0"></div>
<div class="t" style="left:536px;top:273.71px;font-size:9.5px;line-height:20px;transform:scaleX(0.8);transform-origin:0 0;color:#0c1c5c;font-weight:bold">abc</div>
<div class="a" style="left:394px;top:97px;width:1px;height:197px;background:#a0a0a0"></div>
<div class="a" style="left:534px;top:97px;width:1px;height:197px;background:#a0a0a0"></div>
<div class="a" style="left:554px;top:97px;width:1px;height:197px;background:#a0a0a0"></div>
<div class="a" style="left:1010px;top:99px;width:101px;height:102px;background:#fff;border:2px solid #7a7a7a;border-right-color:#5a5a5a;border-bottom-color:#5a5a5a;box-shadow:inset 1px 1px 0 #c8c8c8"></div>
<svg style="left:1036px;top:124px" width="50" height="52"><defs><radialGradient id="eg" cx="0.45" cy="0.35" r="0.75"><stop offset="0" stop-color="#5fb0ff"/><stop offset="0.5" stop-color="#2a74e0"/><stop offset="1" stop-color="#1432a0"/></radialGradient></defs><path d="M11.5 2.5 H37 L46.5 12 V49.5 H11.5 Z" fill="#f1f0ea" stroke="#8d8d86"/><path d="M37 2.5 V12 H46.5" fill="#dcdbd2" stroke="#8d8d86"/><ellipse cx="16" cy="27.5" rx="17.5" ry="6.3" transform="rotate(-40 16 27.5)" fill="none" stroke="#1a2f8a" stroke-width="1.5"/><ellipse cx="16" cy="28" rx="13.6" ry="13" fill="url(#eg)"/><path d="M3.6 30 A13 13 0 0 1 9 18" stroke="#a8b880" stroke-width="1.5" fill="none"/><path d="M14 24.8 C14 20.5 21.8 20.5 21.8 24.8 Z" fill="#fff"/><rect x="14" y="30" width="16" height="2.8" fill="#fff"/></svg>
<svg style="left:1093px;top:181px" width="18" height="19"><path d="M0.5 0.5 H10.5 L14.5 4.5 V16.5 H0.5 Z" fill="#fff" stroke="#555"/><path d="M14.5 4.5 V16.5 H0.5" fill="none" stroke="#000" stroke-width="1.6"/><path d="M10.5 0.5 V4.5 H14.5" fill="none" stroke="#777"/><path d="M4 3.5 L2.5 5.5 L4 7.5 M11 3.5 L12.5 5.5 L11 7.5" fill="none" stroke="#1f3fd0" stroke-width="1.1"/><circle cx="7.5" cy="5.5" r="2.6" fill="#1f8fd0"/><circle cx="7" cy="5" r="1.3" fill="#40c060"/><rect x="3" y="10" width="9" height="1" fill="#2050b0"/><rect x="3" y="12" width="9" height="1" fill="#2050b0"/></svg>
<svg style="left:377px;top:301px" width="9" height="12"><path d="M2.5 0.5 H5.5 L7.5 2.5 V5 L5.5 7 H2.5 L0.5 5 V2.5 Z" fill="#c9d6e0" stroke="#000"/><rect x="3" y="2.8" width="2" height="2" fill="#000"/><rect x="3" y="7" width="2" height="4.5" fill="#000"/></svg>
<div class="a" style="left:392px;top:299px;width:726px;height:17px;background:#b3b3b3"></div>
<div class="t" style="left:390.7px;top:297.02px;font-size:11.5px;line-height:20px;transform:scaleX(0.93);transform-origin:0 0">System Properties:</div>
<div class="a" style="left:375px;top:316px;width:742px;height:74px;background:#fff;border:1px solid #a0a0a0;border-bottom:0"></div>
<div class="a" style="left:392px;top:389px;width:724px;height:1px;background:#fff8c6"></div>
<div class="t" style="left:391px;top:316.02px;font-size:11.5px;line-height:20px;transform:scaleX(0.93);transform-origin:0 0;color:#1b1b50">Name</div>
<div class="t" style="left:551.2px;top:316.02px;font-size:11.5px;line-height:20px;transform:scaleX(0.93);transform-origin:0 0;color:#1b1b50">Value</div>
<svg style="left:521px;top:322.5px" width="7" height="9"><path d="M1.2 0.8 L4.8 3.6 L1.2 6.4" stroke="#8a8a8a" stroke-width="1.7" fill="none"/></svg>
<svg style="left:537px;top:322.5px" width="7" height="9"><path d="M1.2 0.8 L4.8 3.6 L1.2 6.4" stroke="#8a8a8a" stroke-width="1.7" fill="none"/></svg>
<svg style="left:1106px;top:322.5px" width="7" height="9"><path d="M1.2 0.8 L4.8 3.6 L1.2 6.4" stroke="#8a8a8a" stroke-width="1.7" fill="none"/></svg>
<div class="a" style="left:392px;top:337px;width:724px;height:17px;background:#fff8c6"></div>
<div class="a" style="left:376px;top:337px;width:740px;height:1px;background:#a0a0a0"></div>
<svg style="left:379px;top:341.5px" width="7" height="9"><path d="M1.2 0.8 L4.8 3.6 L1.2 6.4" stroke="#8a8a8a" stroke-width="1.7" fill="none"/></svg>
<div class="t" style="left:390.8px;top:336.02px;font-size:11.5px;line-height:20px;transform:scaleX(0.93);transform-origin:0 0">Extension</div>
<div class="t" style="left:551.2px;top:336.02px;font-size:11.5px;line-height:20px;transform:scaleX(0.93);transform-origin:0 0">xml</div>
<div class="t" style="left:533px;top:335.71px;font-size:9.5px;line-height:20px;transform:scaleX(0.8);transform-origin:0 0;color:#0c1c5c;font-weight:bold">abc</div>
<div class="a" style="left:392px;top:354px;width:724px;height:17px;background:#fff8c6"></div>
<div class="a" style="left:376px;top:354px;width:740px;height:1px;background:#a0a0a0"></div>
<svg style="left:379px;top:358.5px" width="7" height="9"><path d="M1.2 0.8 L4.8 3.6 L1.2 6.4" stroke="#8a8a8a" stroke-width="1.7" fill="none"/></svg>
<div class="t" style="left:390.8px;top:353.02px;font-size:11.5px;line-height:20px;transform:scaleX(0.93);transform-origin:0 0">Filename</div>
<div class="t" style="left:551.2px;top:353.02px;font-size:11.5px;line-height:20px;transform:scaleX(0.918);transform-origin:0 0">BulkUpdateConfig.xml</div>
<div class="t" style="left:533px;top:352.71px;font-size:9.5px;line-height:20px;transform:scaleX(0.8);transform-origin:0 0;color:#0c1c5c;font-weight:bold">abc</div>
<div class="a" style="left:392px;top:371px;width:724px;height:17px;background:#fff8c6"></div>
<div class="a" style="left:376px;top:371px;width:740px;height:1px;background:#a0a0a0"></div>
<svg style="left:379px;top:375.5px" width="7" height="9"><path d="M1.2 0.8 L4.8 3.6 L1.2 6.4" stroke="#8a8a8a" stroke-width="1.7" fill="none"/></svg>
<div class="t" style="left:390.8px;top:370.02px;font-size:11.5px;line-height:20px;transform:scaleX(0.93);transform-origin:0 0">Format</div>
<div class="t" style="left:551.2px;top:370.02px;font-size:11.5px;line-height:20px;transform:scaleX(0.913);transform-origin:0 0">XML (Extensible Markup Language document)</div>
<div class="t" style="left:533px;top:369.71px;font-size:9.5px;line-height:20px;transform:scaleX(0.8);transform-origin:0 0;color:#0c1c5c;font-weight:bold">abc</div>
<div class="a" style="left:376px;top:388px;width:740px;height:1px;background:#a0a0a0"></div>
<div class="a" style="left:391px;top:317px;width:1px;height:73px;background:#a0a0a0"></div>
<div class="a" style="left:531px;top:317px;width:1px;height:73px;background:#a0a0a0"></div>
<div class="a" style="left:551px;top:317px;width:1px;height:73px;background:#a0a0a0"></div>
<div class="t" style="left:25px;top:394.02px;font-size:11.5px;line-height:20px">Ready</div>
<div class="a" style="left:1081px;top:409px;width:5px;height:3px;background:#7386a0"></div>
<div class="a" style="left:1088px;top:408px;width:5px;height:4px;background:#7386a0"></div>
<div class="a" style="left:1095px;top:406px;width:5px;height:6px;background:#7386a0"></div>
<div class="a" style="left:1102px;top:404px;width:5px;height:8px;background:#7386a0"></div>
</body></html>
